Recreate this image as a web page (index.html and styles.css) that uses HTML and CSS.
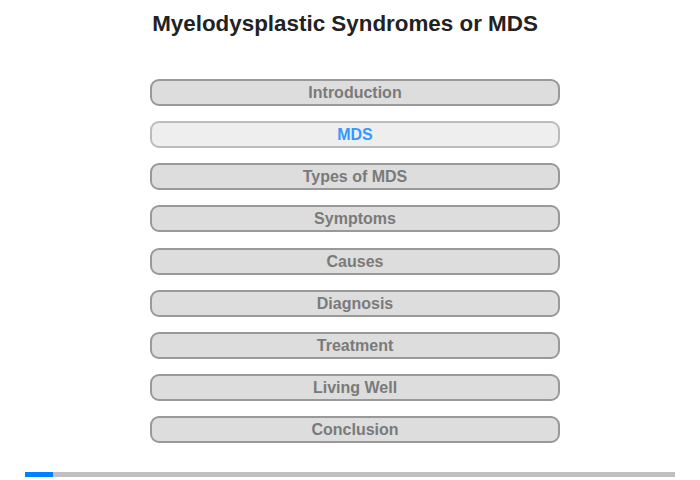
FILE: index.html
```html
<!DOCTYPE html>
<html lang="en">
<head>
<meta charset="UTF-8">
<title>Myelodysplastic Syndromes or MDS</title>
<link rel="stylesheet" href="styles.css">
</head>
<body>

<div class="page">
  <h1 class="title">Myelodysplastic Syndromes or MDS</h1>

  <div class="menu">
    <div class="menu-item">Introduction</div>
    <div class="menu-item active">MDS</div>
    <div class="menu-item">Types of MDS</div>
    <div class="menu-item">Symptoms</div>
    <div class="menu-item">Causes</div>
    <div class="menu-item">Diagnosis</div>
    <div class="menu-item">Treatment</div>
    <div class="menu-item">Living Well</div>
    <div class="menu-item">Conclusion</div>
  </div>

  <div class="progress">
    <div class="progress-fill"></div>
  </div>
</div>

</body>
</html>
```

FILE: styles.css
```css
/* Basic Reset */
* {
  box-sizing: border-box;
  margin: 0;
  padding: 0;
  font-family: 'Liberation Sans', Arial, sans-serif;
}

body {
  background: #ffffff;
  width: 700px;
  height: 480px;
  overflow: hidden;
}

.page {
  padding-top: 11px;
}

/* Title */
.title {
  font-size: 22.4px;
  font-weight: bold;
  color: #222222;
  text-align: center;
  padding-right: 10px;
  line-height: 26px;
}

/* Menu */
.menu {
  display: flex;
  flex-direction: column;
  gap: 15.125px;
  width: 410px;
  margin: 42px 0 0 150px;
}

.menu-item {
  height: 27px;
  line-height: 23px;
  border: 2px solid #999999;
  border-radius: 9px;
  background: #dddddd;
  color: #7a7a7a;
  font-size: 16px;
  font-weight: bold;
  text-align: center;
}

.menu-item.active {
  background: #eeeeee;
  border-color: #bbbbbb;
  color: #3399ff;
}

/* Progress Bar */
.progress {
  height: 5px;
  margin: 29px 25px 0;
  background: #c0c0c0;
}

.progress-fill {
  width: 28px;
  height: 100%;
  background: #0080ff;
}
```
